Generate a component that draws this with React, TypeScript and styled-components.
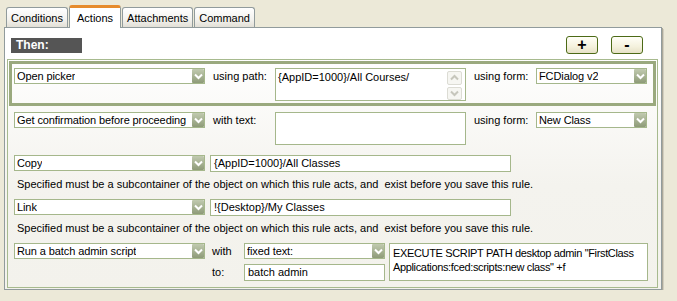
import styled, { createGlobalStyle } from 'styled-components'

const GlobalStyle = createGlobalStyle`
  html, body {
    margin: 0;
    padding: 0;
    background: #ece9d8;
  }
  body {
    font-family: "Liberation Sans", Arial, sans-serif;
    font-size: 11px;
    color: #000;
  }
`

const Chevron = ({ up, color }: { up?: boolean; color: string }) => (
  <svg width="9" height="7" viewBox="0 0 9 7">
    <path
      d={up ? 'M1 5.5 L4.5 2 L8 5.5' : 'M1 1.5 L4.5 5 L8 1.5'}
      fill="none"
      stroke={color}
      strokeWidth="2"
    />
  </svg>
)

const Select = ({ value, width }: { value: string; width: number }) => (
  <SelectBox $width={width}>
    <span>{value}</span>
    <Arrow>
      <Chevron color="#fff" />
    </Arrow>
  </SelectBox>
)

export default function App() {
  return (
    <Page>
      <GlobalStyle />
      <TabBar>
        <Tab>Conditions</Tab>
        <Tab $active>Actions</Tab>
        <Tab>Attachments</Tab>
        <Tab>Command</Tab>
      </TabBar>
      <Panel>
        <Header>
          <ThenLabel>Then:</ThenLabel>
          <Buttons>
            <SmallButton>+</SmallButton>
            <SmallButton>-</SmallButton>
          </Buttons>
        </Header>
        <Frame>
          <HighlightRow>
            <Row>
              <Select value="Open picker" width={191} />
              <Label $width={62}>using path:</Label>
              <TextArea $width={191} $height={33}>
                <span>{'{AppID=1000}/All Courses/'}</span>
                <ScrollCol>
                  <ScrollBtn>
                    <Chevron up color="#c6c6bc" />
                  </ScrollBtn>
                  <ScrollBtn>
                    <Chevron color="#c6c6bc" />
                  </ScrollBtn>
                </ScrollCol>
              </TextArea>
              <Label $width={62}>using form:</Label>
              <Select value="FCDialog v2" width={111} />
            </Row>
          </HighlightRow>

          <Row $top={6}>
            <Select value="Get confirmation before proceeding" width={191} />
            <Label $width={62}>with text:</Label>
            <TextArea $width={191} $height={33} />
            <Label $width={62}>using form:</Label>
            <Select value="New Class" width={111} />
          </Row>

          <Row $top={10}>
            <Select value="Copy" width={191} />
            <Input $width={301} $gap={5}>{'{AppID=1000}/All Classes'}</Input>
          </Row>
          <Help>
            Specified must be a subcontainer of the object on which this rule acts, and&nbsp; exist before you save this rule.
          </Help>

          <Row $top={8}>
            <Select value="Link" width={191} />
            <Input $width={301} $gap={5}>{'!{Desktop}/My Classes'}</Input>
          </Row>
          <Help>
            Specified must be a subcontainer of the object on which this rule acts, and&nbsp; exist before you save this rule.
          </Help>

          <ScriptGrid>
            <Select value="Run a batch admin script" width={191} />
            <GridLabel>with</GridLabel>
            <Select value="fixed text:" width={141} />
            <ScriptText>
              EXECUTE SCRIPT PATH desktop admin "FirstClass
              <br />
              Applications:fced:scripts:new class" +f
            </ScriptText>
            <GridLabel $row={2}>to:</GridLabel>
            <Input $width={141} $row={2}>batch admin</Input>
          </ScriptGrid>
        </Frame>
      </Panel>
    </Page>
  )
}

const Page = styled.div`
  padding: 4px 0 0 4px;
`

const TabBar = styled.div`
  display: flex;
  align-items: flex-end;
  height: 23px;
  padding-left: 2px;
  position: relative;
  z-index: 1;
`

const Tab = styled.div<{ $active?: boolean }>`
  height: ${(p) => (p.$active ? '20px' : '19px')};
  padding: 0 ${(p) => (p.$active ? '7px' : '4px')};
  margin-bottom: ${(p) => (p.$active ? '-1px' : '0')};
  display: flex;
  align-items: center;
  border: 1px solid #919b9c;
  border-bottom: none;
  border-top: ${(p) => (p.$active ? '3px solid #e68b2c' : '1px solid #919b9c')};
  border-radius: 3px 3px 0 0;
  background: ${(p) =>
    p.$active ? '#fff' : 'linear-gradient(#ffffff, #f3f2ee 60%, #e2dfd6)'};
  & + & {
    margin-left: 1px;
  }
`

const Panel = styled.div`
  width: 656px;
  height: 261px;
  border: 1px solid #919b9c;
  background: linear-gradient(#ffffff 10%, #f4f3ee 60%, #f3f2ec);
  box-shadow: 1px 1px 0 #aca899, 2px 2px 0 #d2cfc0;
  display: flex;
  flex-direction: column;
`

const Header = styled.div`
  display: flex;
  align-items: center;
  justify-content: space-between;
  padding: 8px 18px 0 6px;
`

const ThenLabel = styled.div`
  width: 66px;
  height: 15px;
  line-height: 15px;
  padding-left: 5px;
  background: #555555;
  color: #fff;
  font-weight: bold;
  font-size: 12px;
`

const Buttons = styled.div`
  display: flex;
  gap: 13px;
`

const SmallButton = styled.div`
  width: 30px;
  height: 16px;
  line-height: 16px;
  text-align: center;
  border: 1px solid #4c6a16;
  border-radius: 3px;
  background: linear-gradient(#fffff8, #f4f1dd 60%, #e6e1c6);
  font-weight: bold;
  font-size: 16px;
`

const Frame = styled.div`
  margin: 5px 3px 1px 2px;
  flex: 1;
  border: 1px solid #a7ba8e;
`

const HighlightRow = styled.div`
  margin: 1px;
  border: 3px solid #9aa97e;
  padding: 4px 0 2px 2px;
`

const Row = styled.div<{ $top?: number }>`
  display: flex;
  align-items: flex-start;
  margin-top: ${(p) => p.$top ?? 0}px;
  padding-left: ${(p) => (p.$top !== undefined ? '6px' : '0')};
`

const SelectBox = styled.div<{ $width: number }>`
  width: ${(p) => p.$width}px;
  height: 16px;
  box-sizing: border-box;
  border: 1px solid #a5b78b;
  background: #fff;
  display: flex;
  align-items: center;
  justify-content: space-between;
  padding-left: 2px;
  white-space: nowrap;
  overflow: hidden;
  & > span {
    overflow: hidden;
    letter-spacing: -0.1px;
  }
`

const Arrow = styled.span`
  flex: none;
  width: 12px;
  height: 14px;
  border-radius: 1px;
  background: linear-gradient(#c1cab0, #8e9b78);
  display: flex;
  align-items: center;
  justify-content: center;
`

const Label = styled.div<{ $width: number }>`
  width: ${(p) => p.$width}px;
  margin-left: 8px;
  line-height: 16px;
  white-space: nowrap;
`

const TextArea = styled.div<{ $width: number; $height: number }>`
  width: ${(p) => p.$width}px;
  height: ${(p) => p.$height}px;
  box-sizing: border-box;
  border: 1px solid #a5b78b;
  background: #fff;
  display: flex;
  justify-content: space-between;
  padding: 2px 3px 0 2px;
  line-height: 13px;
`

const ScrollCol = styled.div`
  display: flex;
  flex-direction: column;
  gap: 2px;
`

const ScrollBtn = styled.div`
  width: 13px;
  height: 13px;
  border: 1px solid #dcdcd4;
  border-radius: 2px;
  background: #f6f6f2;
  display: flex;
  align-items: center;
  justify-content: center;
`

const Input = styled.div<{ $width: number; $gap?: number; $row?: number }>`
  width: ${(p) => p.$width}px;
  height: 17px;
  box-sizing: border-box;
  margin-left: ${(p) => p.$gap ?? 0}px;
  border: 1px solid #a5b78b;
  background: #fff;
  padding-left: 3px;
  line-height: 15px;
  white-space: nowrap;
  grid-column: ${(p) => (p.$row ? '3' : 'auto')};
  grid-row: ${(p) => p.$row ?? 'auto'};
`

const Help = styled.div`
  margin-top: 6px;
  padding-left: 9px;
  line-height: 13px;
  white-space: nowrap;
`

const ScriptGrid = styled.div`
  display: grid;
  grid-template-columns: 198px 32px 145px 259px;
  grid-template-rows: 17px 17px;
  row-gap: 4px;
  margin-top: 8px;
  padding-left: 6px;
`

const GridLabel = styled.div<{ $row?: number }>`
  grid-column: 2;
  grid-row: ${(p) => p.$row ?? 1};
  line-height: 16px;
`

const ScriptText = styled.div`
  grid-column: 4;
  grid-row: 1 / span 2;
  height: 38px;
  box-sizing: border-box;
  border: 1px solid #a5b78b;
  background: #fff;
  padding: 2px 3px;
  line-height: 14px;
  letter-spacing: -0.35px;
  white-space: nowrap;
  overflow: hidden;
`
